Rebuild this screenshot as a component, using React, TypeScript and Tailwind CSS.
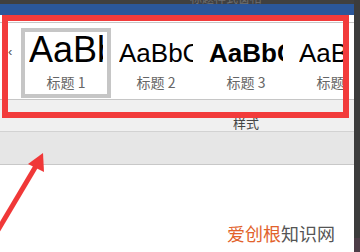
import React from "react";

const FONT = { fontFamily: '"Liberation Sans", "Noto Sans CJK SC", sans-serif' };
const CJK = { fontFamily: '"Noto Sans CJK SC", "Liberation Sans", sans-serif' };

interface StyleItem {
  preview: string;
  label: string;
  previewClass: string;
  selected?: boolean;
}

const STYLES: StyleItem[] = [
  { preview: "AaBbCcDd", label: "标题 1", previewClass: "text-[36px] leading-[36px]", selected: true },
  { preview: "AaBbCcDd", label: "标题 2", previewClass: "mt-[3px] text-[26px] leading-[36px]" },
  { preview: "AaBbCcDd", label: "标题 3", previewClass: "mt-[3px] text-[26px] font-bold leading-[36px]" },
  { preview: "AaBbCcDd", label: "标题 4", previewClass: "mt-[3px] text-[26px] leading-[36px]" },
];

function GalleryItem({ item }: { item: StyleItem }) {
  return (
    <div
      className={`flex h-[70px] w-[90px] shrink-0 flex-col border-[4px] ${
        item.selected ? "border-[#c6c6c6]" : "border-transparent"
      }`}
    >
      <div className="ml-[4px] h-[36px] w-[74px] overflow-hidden whitespace-nowrap text-black" style={FONT}>
        <div className={item.previewClass}>{item.preview}</div>
      </div>
      <div className="mt-[4px] text-center text-[14px] leading-[20px] text-[#666666]" style={CJK}>
        {item.label}
      </div>
    </div>
  );
}

export default function App() {
  return (
    <div className="relative flex h-[252px] w-[360px] overflow-hidden bg-white">
      <div className="flex flex-1 flex-col">
        {/* 标题栏残影 */}
        <div className="h-[4px] overflow-hidden bg-[#404040]">
          <div className="-mt-[9px] pl-[190px] text-[12px] leading-[14px] text-[#6e6e6e]" style={CJK}>
            标题样式窗格
          </div>
        </div>
        <div className="h-[11px] bg-[#2b579a]" />
        <div className="h-[7px] bg-white" />

        {/* 样式库 */}
        <div className="flex border-y border-[#c6c6c6] bg-white pb-[1px] pt-[5px]">
          <div className="w-[21px] shrink-0 pl-[8px] pt-[17px] text-[13px] leading-[14px] text-[#555555]" style={FONT}>
            ‹
          </div>
          <div className="flex w-[325px] overflow-hidden">
            {STYLES.map((item) => (
              <GalleryItem key={item.label} item={item} />
            ))}
          </div>
        </div>

        <div className="h-[32px] border-b border-[#d2d2d2] bg-[#f0f0f0] pl-[233px] pt-[15px] text-[13px] leading-[16px] text-[#444444]" style={CJK}>
          样式
        </div>
        <div className="h-[33px] border-b border-[#c8c8c8] bg-[#e6e6e6]" />
        <div className="flex-1 bg-white" />
      </div>

      <div className="flex w-[6px] flex-col bg-[#3c3c3c]">
        <div className="flex-1" />
        <div className="h-[14px] bg-[#4d3d47]" />
      </div>

      {/* 标注框 */}
      <div className="absolute left-[2px] top-[15px] h-[103px] w-[347px] border-[6px] border-[#f23b3b]" />

      {/* 箭头 */}
      <svg className="absolute left-0 top-[150px]" width="50" height="85" viewBox="0 0 50 85">
        <line x1="-2" y1="80" x2="36" y2="16" stroke="#f03838" strokeWidth="5" />
        <polygon points="43,3 44,22 28,14" fill="#f03838" />
      </svg>

      {/* 水印 */}
      <div className="absolute left-[227px] top-[222px] text-[18px] leading-[22px]" style={CJK}>
        <span className="text-[#e2622b]">爱创根</span>
        <span className="text-[#555555]">知识网</span>
      </div>
    </div>
  );
}
